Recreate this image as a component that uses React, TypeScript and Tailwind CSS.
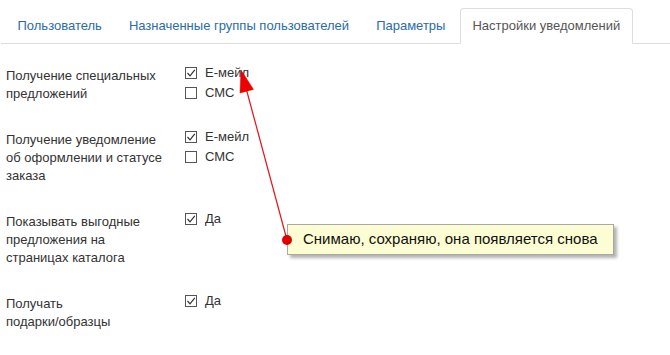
import React from 'react';

const tabs = ['Пользователь', 'Назначенные группы пользователей', 'Параметры', 'Настройки уведомлений'];

const rows: { label: string[]; options: { text: string; checked: boolean }[] }[] = [
  {
    label: ['Получение специальных', 'предложений'],
    options: [
      { text: 'Е-мейл', checked: true },
      { text: 'СМС', checked: false },
    ],
  },
  {
    label: ['Получение уведомление', 'об оформлении и статусе', 'заказа'],
    options: [
      { text: 'Е-мейл', checked: true },
      { text: 'СМС', checked: false },
    ],
  },
  {
    label: ['Показывать выгодные', 'предложения на', 'страницах каталога'],
    options: [{ text: 'Да', checked: true }],
  },
  {
    label: ['Получать', 'подарки/образцы'],
    options: [{ text: 'Да', checked: true }],
  },
];

const CheckBox = ({ checked }: { checked: boolean }) => (
  <span className="w-[12px] h-[12px] border border-[#555] bg-white flex items-center justify-center shrink-0">
    {checked && (
      <svg width="10" height="10" viewBox="0 0 10 10">
        <path d="M1.5 5 L4 7.8 L8.8 1.8" fill="none" stroke="#333" strokeWidth="1.2" />
      </svg>
    )}
  </span>
);

export default function App() {
  return (
    <div className="relative w-[670px] h-[355px] bg-white overflow-hidden text-[13px] text-[#333]" style={{ fontFamily: '"Liberation Sans", Arial, sans-serif' }}>
      {/* tabs */}
      <div className="pt-2 pl-[4px] ml-[1px] flex border-b border-[#ddd] h-[44px]">
        {tabs.map((t, i) => {
          const active = i === tabs.length - 1;
          return (
            <div
              key={t}
              className={`mr-[2px] px-[11.5px] h-[36px] flex items-center rounded-t-[4px] border ${
                active ? 'border-[#ddd] border-b-white bg-white text-[#555]' : 'border-transparent text-[#2a6ca8]'
              }`}
            >
              {t}
            </div>
          );
        })}
      </div>

      {/* settings */}
      <div className="pt-[19px] flex flex-col gap-[24px]">
        {rows.map((r, i) => (
          <div key={i} className="flex">
            <div className="w-[184px] pl-[6px] pt-[4px] leading-[18px]">
              {r.label.map((l) => (
                <div key={l} className="whitespace-nowrap">{l}</div>
              ))}
            </div>
            <div className="flex flex-col">
              {r.options.map((o) => (
                <div key={o.text} className="flex items-center gap-[8px] h-[20px] pl-[1px]">
                  <CheckBox checked={o.checked} />
                  <span>{o.text}</span>
                </div>
              ))}
            </div>
          </div>
        ))}
      </div>

      {/* annotation arrow */}
      <svg className="absolute inset-0 pointer-events-none" width="670" height="355">
        <line x1="287" y1="240" x2="246" y2="88" stroke="#e3161b" strokeWidth="1.2" />
        <polygon points="241,70 253.5,89.4 240,93" fill="#ee0000" stroke="#d00" strokeWidth="0.5" />
      </svg>

      {/* callout */}
      <div className="absolute left-[287px] top-[224px] w-[327px] h-[31px] bg-[#fdfdd3] border border-[#a9a9a0] shadow-[3px_3px_3px_rgba(0,0,0,0.3)] flex items-center pl-[15px] text-[15px] text-[#111]">
        Снимаю, сохраняю, она появляется снова
      </div>
      <svg className="absolute left-[281px] top-[234px]" width="12" height="12">
        <circle cx="6" cy="6" r="5" fill="#e00000" />
      </svg>
    </div>
  );
}
